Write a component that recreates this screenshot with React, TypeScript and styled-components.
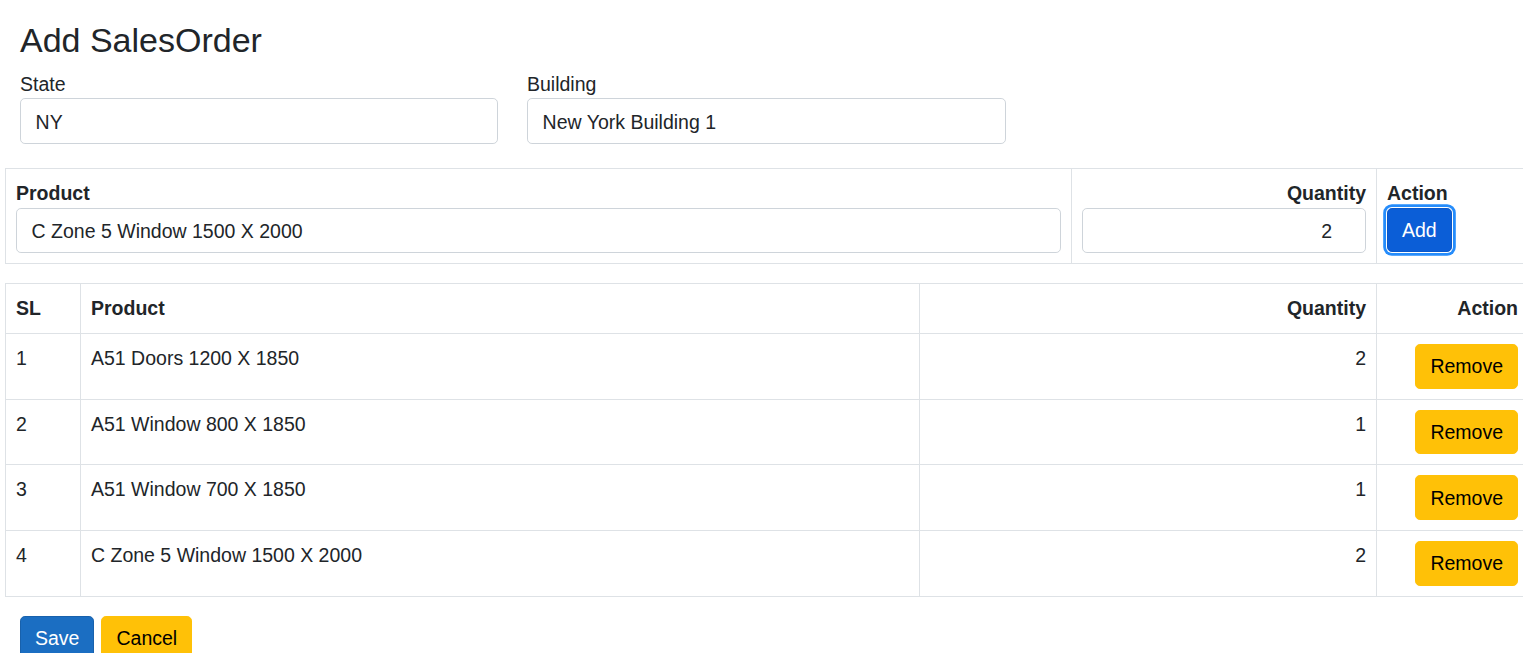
import styled, { createGlobalStyle } from 'styled-components';

const GlobalStyle = createGlobalStyle`
    html, body {
        margin: 0;
        padding: 0;
        background: #fff;
        overflow: hidden;
    }
    body {
        font-family: 'Liberation Sans', Arial, sans-serif;
        font-size: 19.5px;
        line-height: 1.5;
        color: #212529;
    }
    * {
        box-sizing: border-box;
    }
`;

const Page = styled.div`
    height: 653px;
    overflow: hidden;
    padding: 20px 0 0 5px;
`;

const Title = styled.h3`
    margin: 0 0 9px 15px;
    font-size: 34px;
    font-weight: 400;
    line-height: 1.2;
`;

const HeaderFields = styled.div`
    display: grid;
    grid-template-columns: 478px 479px;
    column-gap: 29px;
    margin-left: 15px;
`;

const Field = styled.div`
    display: flex;
    flex-direction: column;
`;

const Label = styled.label`
    line-height: 28px;
`;

const Input = styled.input<{ $align?: 'left' | 'right'; $h?: number }>`
    width: 100%;
    height: ${(p) => p.$h ?? 46}px;
    padding: 3px ${(p) => (p.$align === 'right' ? '33px' : '14.6px')} 0 14.6px;
    border: 1px solid #ced4da;
    border-radius: 4.9px;
    font: inherit;
    color: #212529;
    text-align: ${(p) => p.$align ?? 'left'};
    background: #fff;
    outline: none;
`;

const Table = styled.table<{ $top: number }>`
    width: 1524px;
    margin-top: ${(p) => p.$top}px;
    border-collapse: collapse;
    table-layout: fixed;
`;

const Cell = styled.td<{ $align?: 'left' | 'right' }>`
    padding: 10px;
    border: 1px solid #dee2e6;
    vertical-align: top;
    text-align: ${(p) => p.$align ?? 'left'};
`;

const HeadCell = styled(Cell).attrs({ as: 'th' })`
    font-weight: 700;
`;

const CellLabel = styled.div<{ $align?: 'left' | 'right' }>`
    font-weight: 700;
    line-height: 29px;
    text-align: ${(p) => p.$align ?? 'left'};
`;

const Button = styled.button<{ $variant: 'primary' | 'warning' | 'active' }>`
    display: inline-block;
    height: 44.7px;
    padding: 1px 14px 0;
    border: 1px solid
        ${(p) =>
            p.$variant === 'warning'
                ? '#ffc107'
                : p.$variant === 'active'
                  ? '#0a58ca'
                  : '#1861ac'};
    border-radius: 4.9px;
    background: ${(p) =>
        p.$variant === 'warning'
            ? '#ffc107'
            : p.$variant === 'active'
              ? '#0b5ed7'
              : '#1b6ec2'};
    color: ${(p) => (p.$variant === 'warning' ? '#000' : '#fff')};
    font: inherit;
    line-height: 29px;
    cursor: pointer;
    box-shadow: ${(p) =>
        p.$variant === 'active'
            ? '0 0 0 1px #fff, 0 0 0 3.8px #258cfb'
            : 'none'};
`;

const Footer = styled.div`
    display: flex;
    gap: 7px;
    margin: 19px 0 0 15px;
`;

const items = [
    { product: 'A51 Doors 1200 X 1850', qty: 2 },
    { product: 'A51 Window 800 X 1850', qty: 1 },
    { product: 'A51 Window 700 X 1850', qty: 1 },
    { product: 'C Zone 5 Window 1500 X 2000', qty: 2 },
];

export default function App() {
    return (
        <>
            <GlobalStyle />
            <Page>
                <Title>Add SalesOrder</Title>
                <HeaderFields>
                    <Field>
                        <Label>State</Label>
                        <Input defaultValue="NY" />
                    </Field>
                    <Field>
                        <Label>Building</Label>
                        <Input defaultValue="New York Building 1" />
                    </Field>
                </HeaderFields>

                <Table $top={24}>
                    <colgroup>
                        <col style={{ width: 1066 }} />
                        <col style={{ width: 305 }} />
                        <col />
                    </colgroup>
                    <tbody>
                        <tr>
                            <Cell>
                                <CellLabel>Product</CellLabel>
                                <Input $h={45} defaultValue="C Zone 5 Window 1500 X 2000" />
                            </Cell>
                            <Cell>
                                <CellLabel $align="right">Quantity</CellLabel>
                                <Input $h={45} $align="right" defaultValue="2" />
                            </Cell>
                            <Cell>
                                <CellLabel>Action</CellLabel>
                                <Button $variant="active">Add</Button>
                            </Cell>
                        </tr>
                    </tbody>
                </Table>

                <Table $top={19}>
                    <colgroup>
                        <col style={{ width: 75 }} />
                        <col style={{ width: 839 }} />
                        <col style={{ width: 457 }} />
                        <col />
                    </colgroup>
                    <thead>
                        <tr>
                            <HeadCell>SL</HeadCell>
                            <HeadCell>Product</HeadCell>
                            <HeadCell $align="right">Quantity</HeadCell>
                            <HeadCell $align="right">Action</HeadCell>
                        </tr>
                    </thead>
                    <tbody>
                        {items.map((item, i) => (
                            <tr key={i}>
                                <Cell>{i + 1}</Cell>
                                <Cell>{item.product}</Cell>
                                <Cell $align="right">{item.qty}</Cell>
                                <Cell $align="right">
                                    <Button $variant="warning">Remove</Button>
                                </Cell>
                            </tr>
                        ))}
                    </tbody>
                </Table>

                <Footer>
                    <Button $variant="primary">Save</Button>
                    <Button $variant="warning">Cancel</Button>
                </Footer>
            </Page>
        </>
    );
}
